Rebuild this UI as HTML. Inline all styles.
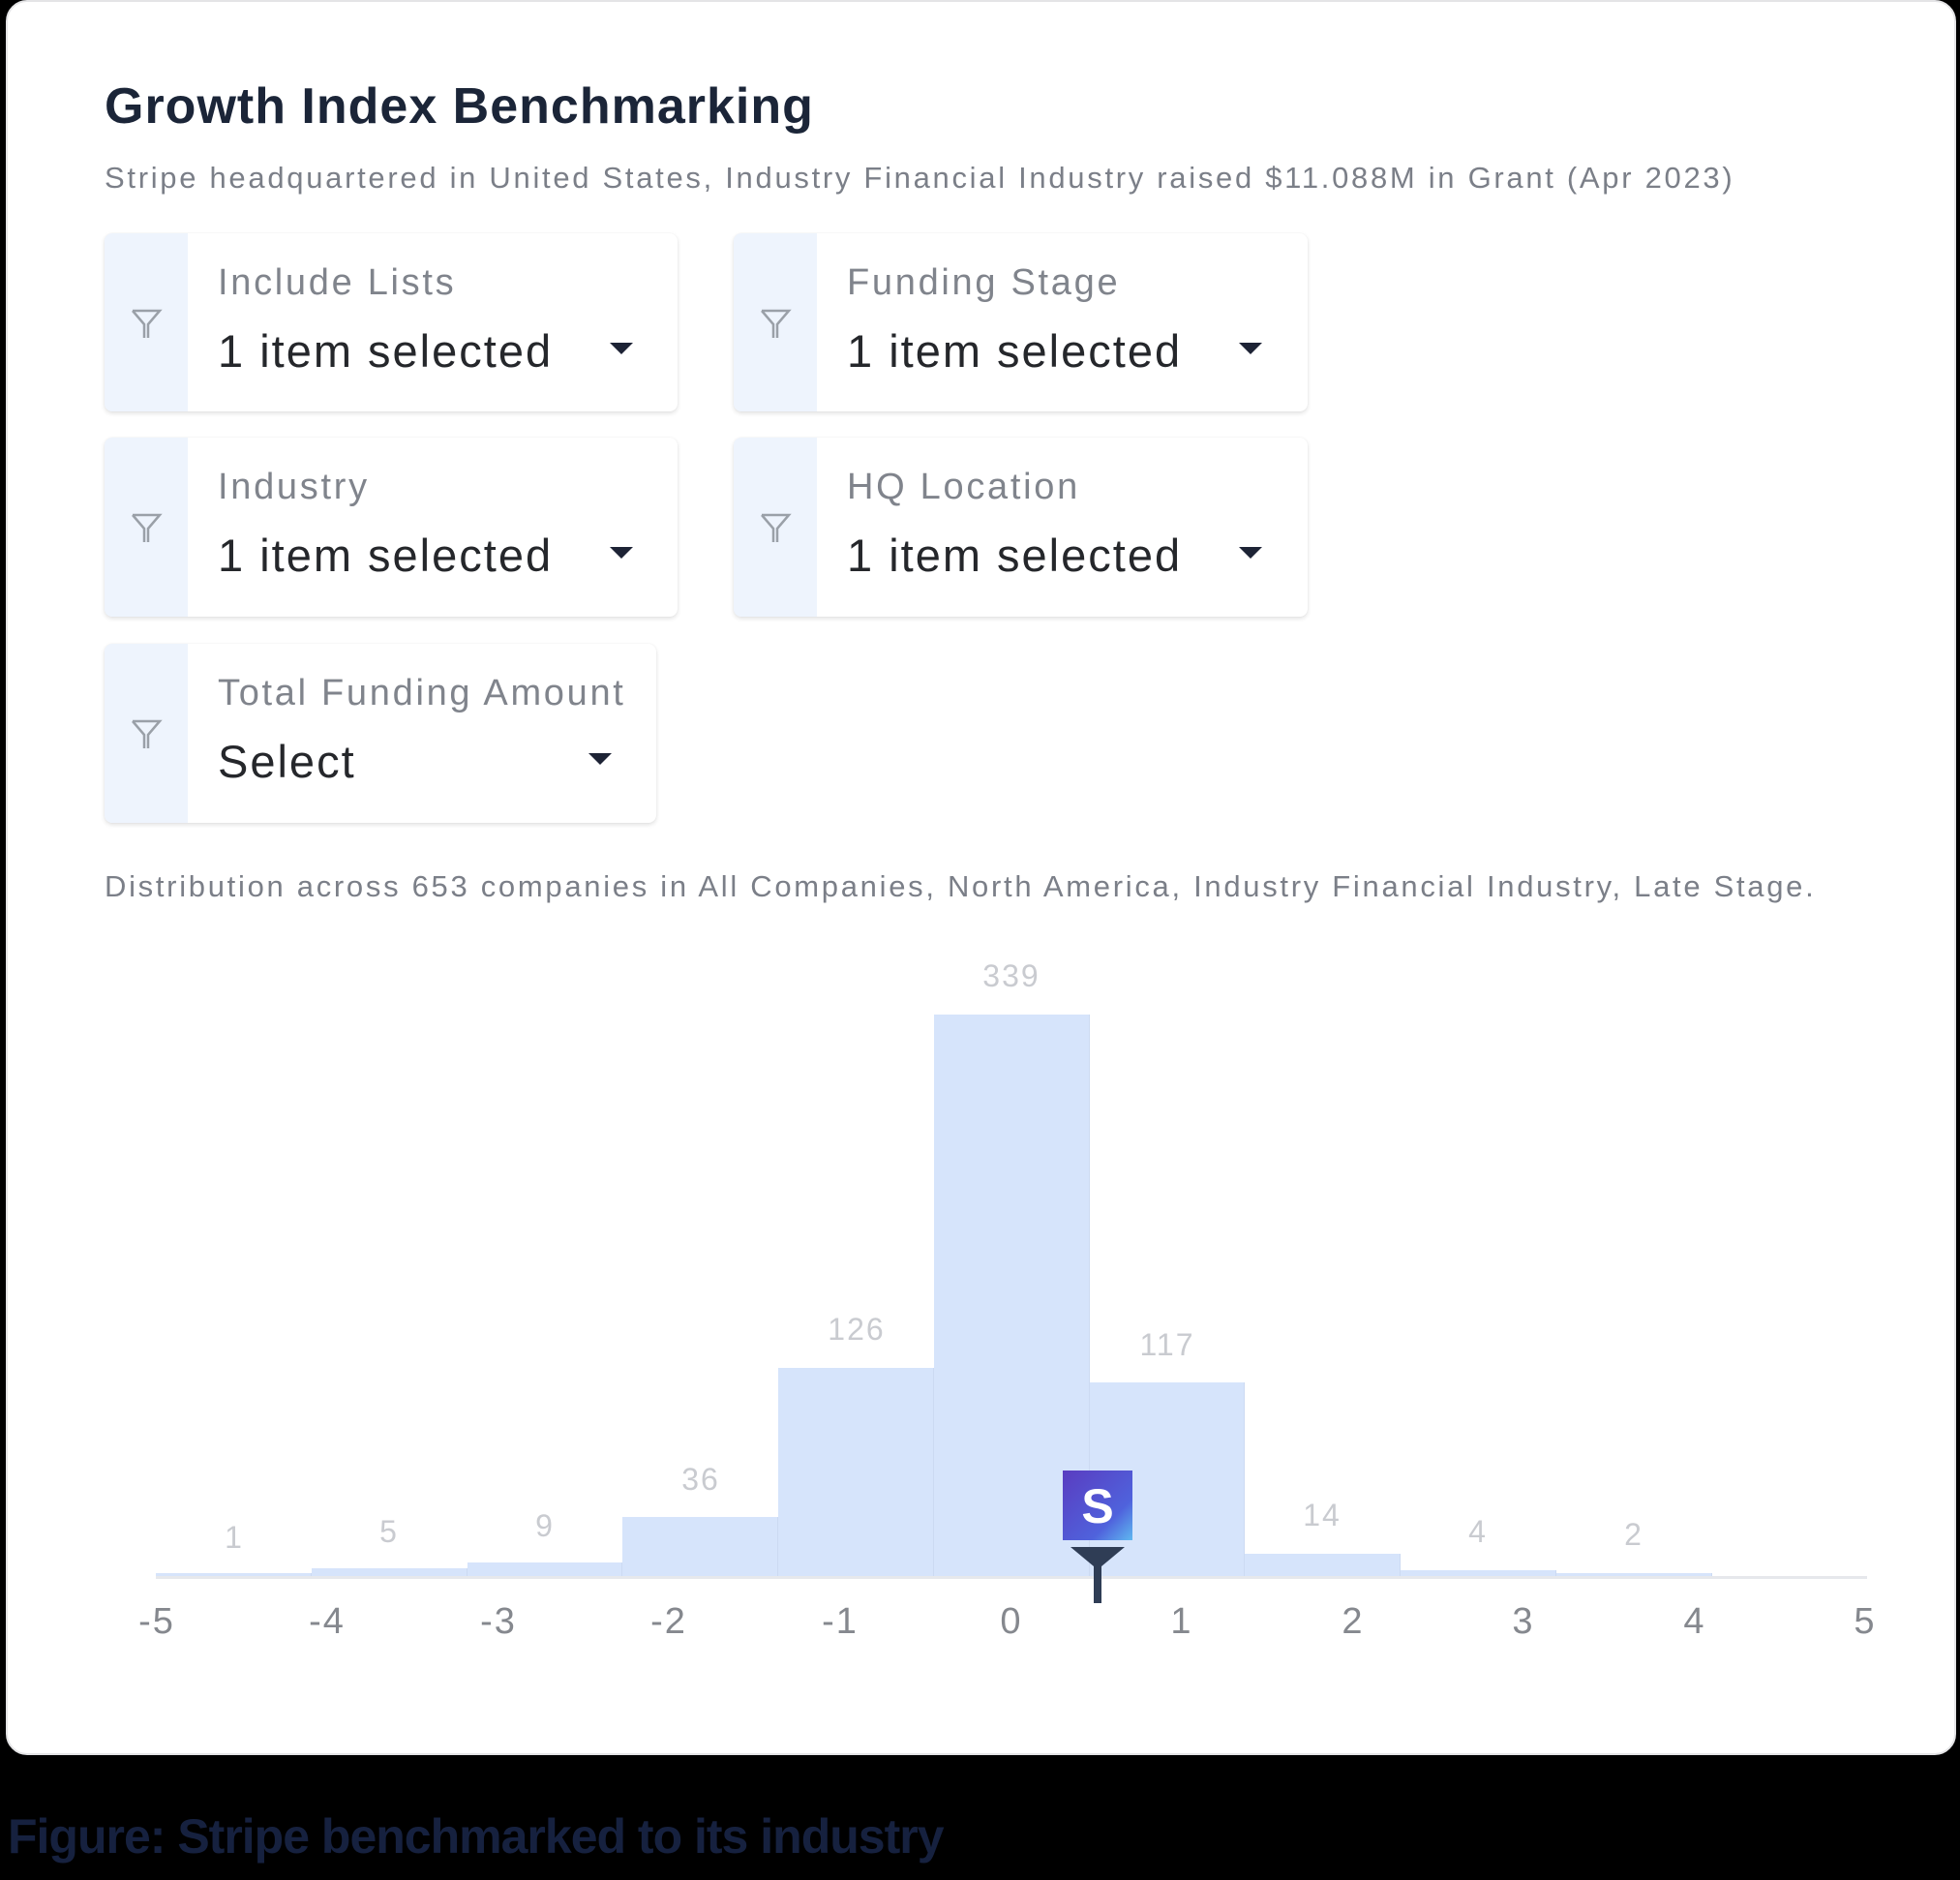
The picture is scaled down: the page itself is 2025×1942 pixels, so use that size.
<!DOCTYPE html>
<html><head><meta charset="utf-8"><style>
*{margin:0;padding:0;box-sizing:border-box}
body{width:2025px;height:1942px;background:#000;position:relative;overflow:hidden;font-family:"Liberation Sans",sans-serif}
.card{position:absolute;left:6px;top:0;width:2015px;height:1813px;background:#fff;border-radius:22px;border:2px solid #e4e4e6}
.a{position:absolute;white-space:nowrap}
.title{left:108px;top:80px;font-size:52px;font-weight:bold;color:#1b2538;letter-spacing:1px}
.sub{left:108px;top:166px;font-size:31px;color:#7b7f88;letter-spacing:2.7px}
.box{position:absolute;background:#fff;border-radius:8px;box-shadow:0 2px 5px rgba(0,0,0,.12),0 0 1px rgba(0,0,0,.08);overflow:hidden}
.box .ic{position:absolute;left:0;top:0;bottom:0;width:86px;background:#eef4fd}
.box .ic svg{position:absolute;left:26px;top:76px}
.box .lb{position:absolute;left:117px;top:30px;font-size:38px;color:#80848c;letter-spacing:2.7px}
.box .vl{position:absolute;left:117px;top:94px;font-size:47px;color:#25272b;letter-spacing:2px}
.box .cr{position:absolute;top:113px;width:0;height:0;border-left:12px solid transparent;border-right:12px solid transparent;border-top:12px solid #1d2335}
.dist{left:108px;top:898px;font-size:31px;color:#7b7f88;letter-spacing:2.7px}
.bar{position:absolute;background:#d6e4fb;border-right:1px solid #ccdaf2}
.cnt{position:absolute;width:160px;text-align:center;font-size:32px;color:#c9cbd0;letter-spacing:2px}
.tk{position:absolute;width:80px;text-align:center;font-size:38px;color:#85888e;top:1654px;letter-spacing:2px}
.cap{left:8px;top:1868px;font-size:50px;font-weight:bold;color:#16213f;letter-spacing:-1px}
</style></head><body>
<div class="card"></div>
<div class="a title">Growth Index Benchmarking</div>
<div class="a sub">Stripe headquartered in United States, Industry Financial Industry raised $11.088M in Grant (Apr 2023)</div>

<div class="box" style="left:108px;top:241px;width:592px;height:184px"><div class="ic"><svg width="34" height="34" viewBox="0 0 34 34"><path d="M3 4H31L19 18V32M15 32V18L3 4" fill="none" stroke="#9aa0a8" stroke-width="2.5"/></svg></div><div class="lb">Include Lists</div><div class="vl">1 item selected</div><div class="cr" style="left:522px"></div></div>
<div class="box" style="left:758px;top:241px;width:593px;height:184px"><div class="ic"><svg width="34" height="34" viewBox="0 0 34 34"><path d="M3 4H31L19 18V32M15 32V18L3 4" fill="none" stroke="#9aa0a8" stroke-width="2.5"/></svg></div><div class="lb">Funding Stage</div><div class="vl">1 item selected</div><div class="cr" style="left:522px"></div></div>
<div class="box" style="left:108px;top:452px;width:592px;height:185px"><div class="ic"><svg width="34" height="34" viewBox="0 0 34 34"><path d="M3 4H31L19 18V32M15 32V18L3 4" fill="none" stroke="#9aa0a8" stroke-width="2.5"/></svg></div><div class="lb">Industry</div><div class="vl">1 item selected</div><div class="cr" style="left:522px"></div></div>
<div class="box" style="left:758px;top:452px;width:593px;height:185px"><div class="ic"><svg width="34" height="34" viewBox="0 0 34 34"><path d="M3 4H31L19 18V32M15 32V18L3 4" fill="none" stroke="#9aa0a8" stroke-width="2.5"/></svg></div><div class="lb">HQ Location</div><div class="vl">1 item selected</div><div class="cr" style="left:522px"></div></div>
<div class="box" style="left:108px;top:665px;width:570px;height:185px"><div class="ic"><svg width="34" height="34" viewBox="0 0 34 34"><path d="M3 4H31L19 18V32M15 32V18L3 4" fill="none" stroke="#9aa0a8" stroke-width="2.5"/></svg></div><div class="lb">Total Funding Amount</div><div class="vl">Select</div><div class="cr" style="left:500px"></div></div>

<div class="a dist">Distribution across 653 companies in All Companies, North America, Industry Financial Industry, Late Stage.</div>

<div class="bar" style="left:161px;top:1625px;width:161px;height:4px"></div>
<div class="bar" style="left:322px;top:1620px;width:161px;height:9px"></div>
<div class="bar" style="left:483px;top:1614px;width:160px;height:15px"></div>
<div class="bar" style="left:643px;top:1567px;width:161px;height:62px"></div>
<div class="bar" style="left:804px;top:1413px;width:161px;height:216px"></div>
<div class="bar" style="left:965px;top:1048px;width:161px;height:581px"></div>
<div class="bar" style="left:1126px;top:1428px;width:160px;height:201px"></div>
<div class="bar" style="left:1286px;top:1605px;width:161px;height:24px"></div>
<div class="bar" style="left:1447px;top:1622px;width:161px;height:7px"></div>
<div class="bar" style="left:1608px;top:1625px;width:161px;height:4px"></div>
<div style="position:absolute;left:161px;top:1628px;width:1768px;height:3px;background:#e6e8ec"></div>

<div class="cnt" style="left:162px;top:1570px">1</div>
<div class="cnt" style="left:322px;top:1564px">5</div>
<div class="cnt" style="left:483px;top:1558px">9</div>
<div class="cnt" style="left:644px;top:1510px">36</div>
<div class="cnt" style="left:805px;top:1355px">126</div>
<div class="cnt" style="left:965px;top:990px">339</div>
<div class="cnt" style="left:1126px;top:1371px">117</div>
<div class="cnt" style="left:1286px;top:1547px">14</div>
<div class="cnt" style="left:1447px;top:1564px">4</div>
<div class="cnt" style="left:1608px;top:1567px">2</div>

<div class="tk" style="left:122px">-5</div>
<div class="tk" style="left:298px">-4</div>
<div class="tk" style="left:475px">-3</div>
<div class="tk" style="left:651px">-2</div>
<div class="tk" style="left:828px">-1</div>
<div class="tk" style="left:1005px">0</div>
<div class="tk" style="left:1181px">1</div>
<div class="tk" style="left:1358px">2</div>
<div class="tk" style="left:1534px">3</div>
<div class="tk" style="left:1711px">4</div>
<div class="tk" style="left:1887px">5</div>

<svg style="position:absolute;left:1096px;top:1517px" width="76" height="145" viewBox="0 0 76 145">
<defs><linearGradient id="g" x1="0" y1="0" x2="1" y2="1"><stop offset="0" stop-color="#5a3cc0"/><stop offset=".7" stop-color="#4f62dc"/><stop offset="1" stop-color="#5fb8f0"/></linearGradient></defs>
<rect x="2" y="2" width="72" height="72" fill="url(#g)"/>
<text x="38" y="56" text-anchor="middle" font-family="Liberation Sans" font-weight="bold" font-size="50" fill="#fff">S</text>
<path d="M10 81H66L42 101V139H34V101Z" fill="#2f3d55"/>
</svg>

<div class="a cap">Figure: Stripe benchmarked to its industry</div>
</body></html>
